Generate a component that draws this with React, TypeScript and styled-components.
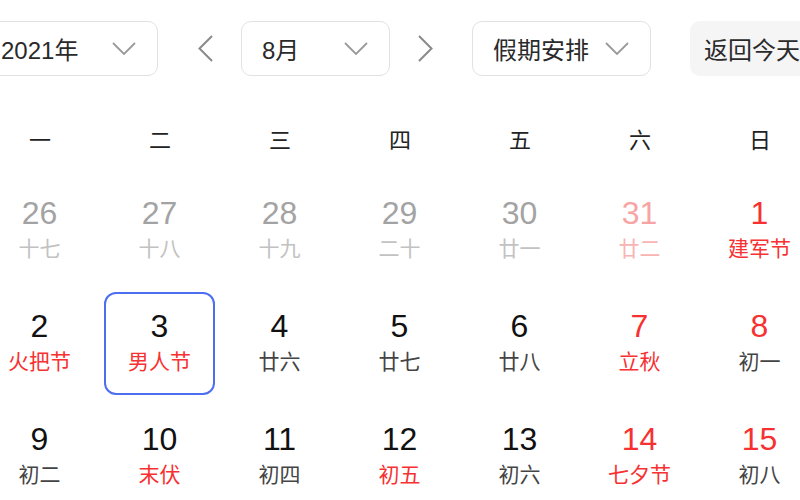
import { FC } from 'react';
import styled, { createGlobalStyle } from 'styled-components';

// Global
const GlobalStyle = createGlobalStyle`
  html, body {
    margin: 0;
    padding: 0;
    background: #fff;
    overflow: hidden;
  }
  body {
    font-family: "Liberation Sans", "Noto Sans CJK SC", sans-serif;
    color: #222;
  }
`;

// Data
type Tone = 'prev' | 'prevRed' | 'normal' | 'red';

interface Day {
  num: number;
  lunar: string;
  tone: Tone;
  lunarRed?: boolean;
  selected?: boolean;
}

const WEEK = ['一', '二', '三', '四', '五', '六', '日'];

const DAYS: Day[] = [
  { num: 26, lunar: '十七', tone: 'prev' },
  { num: 27, lunar: '十八', tone: 'prev' },
  { num: 28, lunar: '十九', tone: 'prev' },
  { num: 29, lunar: '二十', tone: 'prev' },
  { num: 30, lunar: '廿一', tone: 'prev' },
  { num: 31, lunar: '廿二', tone: 'prevRed' },
  { num: 1, lunar: '建军节', tone: 'red', lunarRed: true },
  { num: 2, lunar: '火把节', tone: 'normal', lunarRed: true },
  { num: 3, lunar: '男人节', tone: 'normal', lunarRed: true, selected: true },
  { num: 4, lunar: '廿六', tone: 'normal' },
  { num: 5, lunar: '廿七', tone: 'normal' },
  { num: 6, lunar: '廿八', tone: 'normal' },
  { num: 7, lunar: '立秋', tone: 'red', lunarRed: true },
  { num: 8, lunar: '初一', tone: 'red' },
  { num: 9, lunar: '初二', tone: 'normal' },
  { num: 10, lunar: '末伏', tone: 'normal', lunarRed: true },
  { num: 11, lunar: '初四', tone: 'normal' },
  { num: 12, lunar: '初五', tone: 'normal', lunarRed: true },
  { num: 13, lunar: '初六', tone: 'normal' },
  { num: 14, lunar: '七夕节', tone: 'red', lunarRed: true },
  { num: 15, lunar: '初八', tone: 'red' },
];

const NUM_COLOR: Record<Tone, string> = {
  prev: '#a3a3a3',
  prevRed: '#f7a4a4',
  normal: '#111',
  red: '#f73131',
};

const lunarColor = (d: Day) => {
  if (d.tone === 'prev') return '#c2c2c2';
  if (d.tone === 'prevRed') return '#f9b3b3';
  return d.lunarRed ? '#f73131' : '#444';
};

// Styled Components
const StyledPage = styled.div`
  width: 840px;
  margin-left: -20px;
`;

const StyledToolbar = styled.div`
  display: flex;
  align-items: center;
  height: 56px;
  margin-top: 20px;
`;

const StyledSelect = styled.div<{ $width: number }>`
  box-sizing: border-box;
  width: ${(p) => p.$width}px;
  height: 55px;
  padding: 0 21px 0 20px;
  border: 1.5px solid #e2e2e4;
  border-radius: 10px;
  display: flex;
  align-items: center;
  justify-content: space-between;
  font-size: 24px;
  color: #2a2a2a;
`;

const StyledArrow = styled.div<{ $left: number; $right: number }>`
  width: 40px;
  height: 55px;
  display: flex;
  align-items: center;
  justify-content: center;
  margin: 0 ${(p) => p.$right}px 0 ${(p) => p.$left}px;
`;

const StyledTodayButton = styled.div`
  box-sizing: border-box;
  height: 55px;
  margin-left: 39px;
  padding: 0 14px;
  border-radius: 10px;
  background: #f5f5f6;
  display: flex;
  align-items: center;
  font-size: 24px;
  color: #2a2a2a;
  white-space: nowrap;
`;

const StyledWeekRow = styled.div`
  box-sizing: border-box;
  display: grid;
  grid-template-columns: repeat(7, 120px);
  height: 66px;
  padding-bottom: 6px;
  margin-top: 32px;
  align-items: center;
`;

const StyledWeekDay = styled.div`
  text-align: center;
  font-size: 22px;
  color: #222;
`;

const StyledGrid = styled.div`
  display: grid;
  grid-template-columns: repeat(7, 120px);
  grid-auto-rows: 113px;
`;

const StyledCell = styled.div<{ $selected?: boolean }>`
  box-sizing: border-box;
  margin: 5px 5px 5px 4px;
  border: 2px solid ${(p) => (p.$selected ? '#4e6ef2' : 'transparent')};
  border-radius: 12px;
  display: flex;
  flex-direction: column;
  align-items: center;
  justify-content: center;
`;

const StyledNum = styled.div<{ $color: string }>`
  font-size: 32px;
  line-height: 36px;
  color: ${(p) => p.$color};
`;

const StyledLunar = styled.div<{ $color: string }>`
  font-size: 21px;
  line-height: 36px;
  color: ${(p) => p.$color};
`;

// Icons
const ChevronDown: FC = () => (
  <svg width="24" height="13" viewBox="0 0 24 13" fill="none">
    <polyline points="1,1 12,12 23,1" stroke="#9a9a9a" strokeWidth="1.8" />
  </svg>
);

const ChevronSide: FC<{ dir: 'left' | 'right' }> = ({ dir }) => (
  <svg width="15" height="27" viewBox="0 0 15 27" fill="none">
    <polyline
      points={dir === 'left' ? '14,1 1.5,13.5 14,26' : '1,1 13.5,13.5 1,26'}
      stroke="#8a8a8a"
      strokeWidth="2"
    />
  </svg>
);

const App: FC = () => (
  <StyledPage>
    <GlobalStyle />
    <StyledToolbar>
      <StyledSelect $width={178}>
        <span>2021年</span>
        <ChevronDown />
      </StyledSelect>
      <StyledArrow $left={27} $right={16}>
        <ChevronSide dir="left" />
      </StyledArrow>
      <StyledSelect $width={149}>
        <span>8月</span>
        <ChevronDown />
      </StyledSelect>
      <StyledArrow $left={15} $right={27}>
        <ChevronSide dir="right" />
      </StyledArrow>
      <StyledSelect $width={179}>
        <span>假期安排</span>
        <ChevronDown />
      </StyledSelect>
      <StyledTodayButton>返回今天</StyledTodayButton>
    </StyledToolbar>

    <StyledWeekRow>
      {WEEK.map((w) => (
        <StyledWeekDay key={w}>{w}</StyledWeekDay>
      ))}
    </StyledWeekRow>

    <StyledGrid>
      {DAYS.map((d) => (
        <StyledCell key={`${d.tone}-${d.num}`} $selected={d.selected}>
          <StyledNum $color={NUM_COLOR[d.tone]}>{d.num}</StyledNum>
          <StyledLunar $color={lunarColor(d)}>{d.lunar}</StyledLunar>
        </StyledCell>
      ))}
    </StyledGrid>
  </StyledPage>
);

export default App;
